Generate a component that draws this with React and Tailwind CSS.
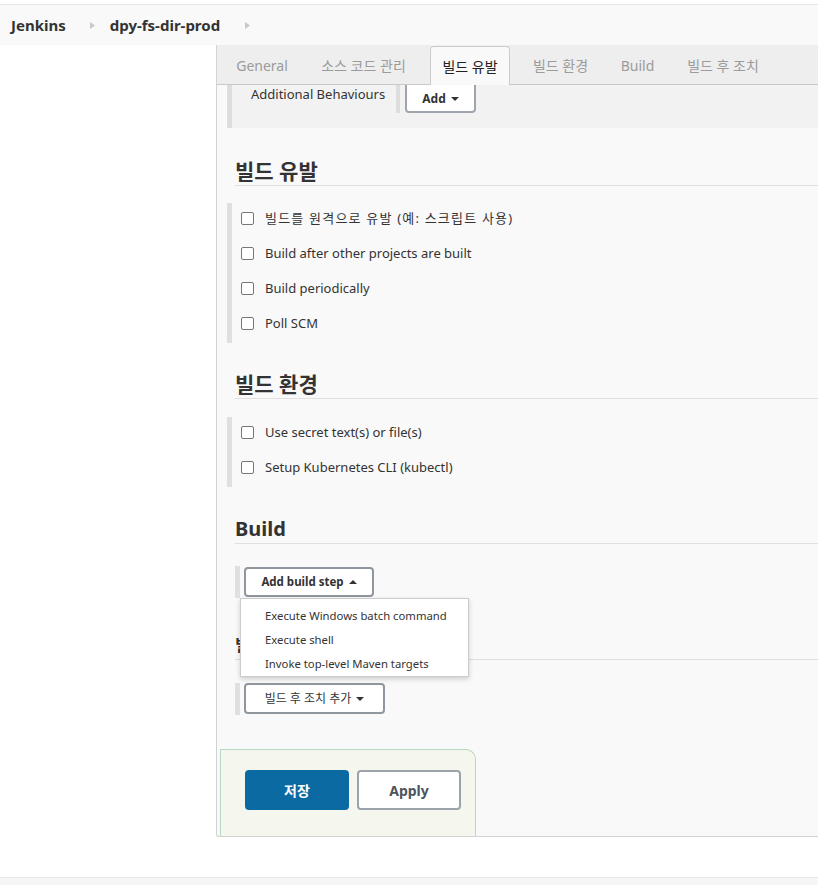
import React from "react";

const tabs = [
  { label: "General", w: "w-[70px]" },
  { label: "소스 코드 관리", w: "w-[113px]" },
  { label: "빌드 유발", w: "w-[80px]", active: true },
  { label: "빌드 환경", w: "w-[81px]" },
  { label: "Build", w: "w-[53px]" },
  { label: "빌드 후 조치", w: "w-[98px]" },
];

function Crumb() {
  return (
    <svg width="5" height="7" viewBox="0 0 5 7" className="shrink-0">
      <polygon points="0,0 5,3.5 0,7" fill="#c9c9c9" />
    </svg>
  );
}

function CaretDown() {
  return (
    <svg width="8" height="4" viewBox="0 0 8 4" className="ml-[5px]">
      <polygon points="0,0 8,0 4,4" fill="#333" />
    </svg>
  );
}

function CaretUp() {
  return (
    <svg width="8" height="4" viewBox="0 0 8 4" className="ml-[5px]">
      <polygon points="0,4 8,4 4,0" fill="#333" />
    </svg>
  );
}

function Check({ label, wide }) {
  return (
    <div className="h-[35px] flex items-start pt-[7px] pl-[9px]">
      <span className="mt-[2px] w-[13px] h-[13px] shrink-0 rounded-[2px] border border-[#767676] bg-white" />
      <span className={`ml-[11px] text-[13px] leading-[16px] text-[#333] ${wide ? "tracking-[1.2px]" : ""}`}>{label}</span>
    </div>
  );
}

function Heading({ children, className = "" }) {
  return (
    <h2
      className={`ml-[18px] font-bold leading-[28px] pt-px text-[#333] border-b border-[#e0e0e0] ${className}`}
    >
      {children}
    </h2>
  );
}

export default function App() {
  return (
    <div className="w-[818px] h-[885px] overflow-hidden bg-white flex flex-col font-['Noto_Sans','Noto_Sans_CJK_KR',sans-serif] text-[#333]">
      <div className="h-[4px] shrink-0" />

      {/* Breadcrumb */}
      <div className="h-[41px] shrink-0 border-t border-[#e6e6e6] bg-[#f9f9f9] flex items-center pl-[11px] text-[15px] font-bold">
        <span>Jenkins</span>
        <span className="ml-[24px]"><Crumb /></span>
        <span className="ml-[15px]">dpy-fs-dir-prod</span>
        <span className="ml-[25px]"><Crumb /></span>
      </div>

      {/* Main */}
      <div className="flex h-[792px] shrink-0">
        <div className="w-[216px] shrink-0" />
        <div className="flex-1 min-w-0 flex flex-col border-l border-b border-[#d2d2d2] rounded-bl-[3px] bg-[#f9f9f9]">
          {/* Tabs */}
          <div className="h-[40px] shrink-0 bg-[#eeeeee] border-b border-[#c9c9c9] flex items-end pl-[10px] gap-[10px] relative z-10">
            {tabs.map((t) => (
              <div
                key={t.label}
                className={`${t.w} h-[38px] shrink-0 flex items-center justify-center text-[14px] ${
                  t.active
                    ? "bg-[#f9f9f9] border border-b-0 border-[#cccccc] rounded-t-[4px] -mb-px h-[39px] text-[#222]"
                    : "text-[#9b9b9b]"
                }`}
              >
                {t.label}
              </div>
            ))}
          </div>

          <div className="flex-1 flex flex-col overflow-hidden">
            {/* Additional Behaviours */}
            <div className="ml-[10px] h-[43px] shrink-0 bg-[#f2f2f2] flex">
              <div className="w-[5px] h-full bg-[#dddddd]" />
              <div className="w-[164px] pl-[19px] text-[13px] leading-[18px] text-[#333]">Additional Behaviours</div>
              <div className="w-[4px] h-[28px] bg-[#dddddd]" />
              <div className="ml-[5px] w-[71px] h-[34px] -mt-[6px] rounded-[4px] border-2 border-[#9ea5ad] bg-white flex items-center justify-center pt-[5px] text-[12px] font-bold">
                Add
                <CaretDown />
              </div>
            </div>

            <Heading className="mt-[28px] text-[21px]">빌드 유발</Heading>
            <div className="ml-[10px] mt-[17px] h-[140px] shrink-0 border-l-[5px] border-[#e0e0e0] flex flex-col">
              <Check label="빌드를 원격으로 유발 (예: 스크립트 사용)" wide />
              <Check label="Build after other projects are built" />
              <Check label="Build periodically" />
              <Check label="Poll SCM" />
            </div>

            <Heading className="mt-[26px] text-[21px]">빌드 환경</Heading>
            <div className="ml-[10px] mt-[18px] h-[70px] shrink-0 border-l-[5px] border-[#e0e0e0] flex flex-col">
              <Check label="Use secret text(s) or file(s)" />
              <Check label="Setup Kubernetes CLI (kubectl)" />
            </div>

            <Heading className="mt-[27px] text-[20px]">Build</Heading>
            <div className="relative ml-[18px] mt-[22px] h-[32px] shrink-0 flex z-10">
              <div className="w-[5px] h-full bg-[#e0e0e0]" />
              <div className="ml-[4px] mt-px w-[130px] h-[30px] rounded-[4px] border-2 border-[#8f969d] bg-white flex items-center justify-center text-[11.5px] font-bold text-[#333]">
                Add build step
                <CaretUp />
              </div>
              {/* Dropdown menu */}
              <div className="absolute left-[5px] top-[32px] w-[229px] h-[79px] bg-white border border-[#cccccc] shadow-[0_2px_5px_rgba(0,0,0,0.18)] py-[5px] text-[11.3px] text-[#333]">
                <div className="h-[24px] flex items-center pl-[24px]">Execute Windows batch command</div>
                <div className="h-[24px] flex items-center pl-[24px]">Execute shell</div>
                <div className="h-[24px] flex items-center pl-[24px]">Invoke top-level Maven targets</div>
              </div>
            </div>

            <Heading className="mt-[32px] text-[16px]">빌드 후 조치</Heading>
            <div className="ml-[18px] mt-[23px] h-[32px] shrink-0 flex">
              <div className="w-[5px] h-full bg-[#e0e0e0]" />
              <div className="ml-[4px] w-[141px] h-[31px] rounded-[4px] border-2 border-[#8f969d] bg-white flex items-center justify-center text-[12px] text-[#333]">
                빌드 후 조치 추가
                <CaretDown />
              </div>
            </div>

            {/* Save bar */}
            <div className="mt-auto ml-[3px] w-[256px] h-[87px] shrink-0 bg-[#f5f7ef] border border-b-0 border-[#b9d8c3] rounded-tr-[10px] flex items-start gap-[8px] pl-[24px] pt-[20px]">
              <div className="w-[104px] h-[40px] rounded-[4px] bg-[#0b6aa2] text-white text-[14px] font-bold flex items-center justify-center">
                저장
              </div>
              <div className="w-[104px] h-[40px] rounded-[4px] bg-white border-2 border-[#9ba3ab] text-[#4d545d] text-[14px] font-bold flex items-center justify-center">
                Apply
              </div>
            </div>
          </div>
        </div>
      </div>

      <div className="h-[40px] shrink-0" />
      <div className="flex-1 border-t border-[#e8e8e8] bg-[#f6f6f6]" />
    </div>
  );
}
